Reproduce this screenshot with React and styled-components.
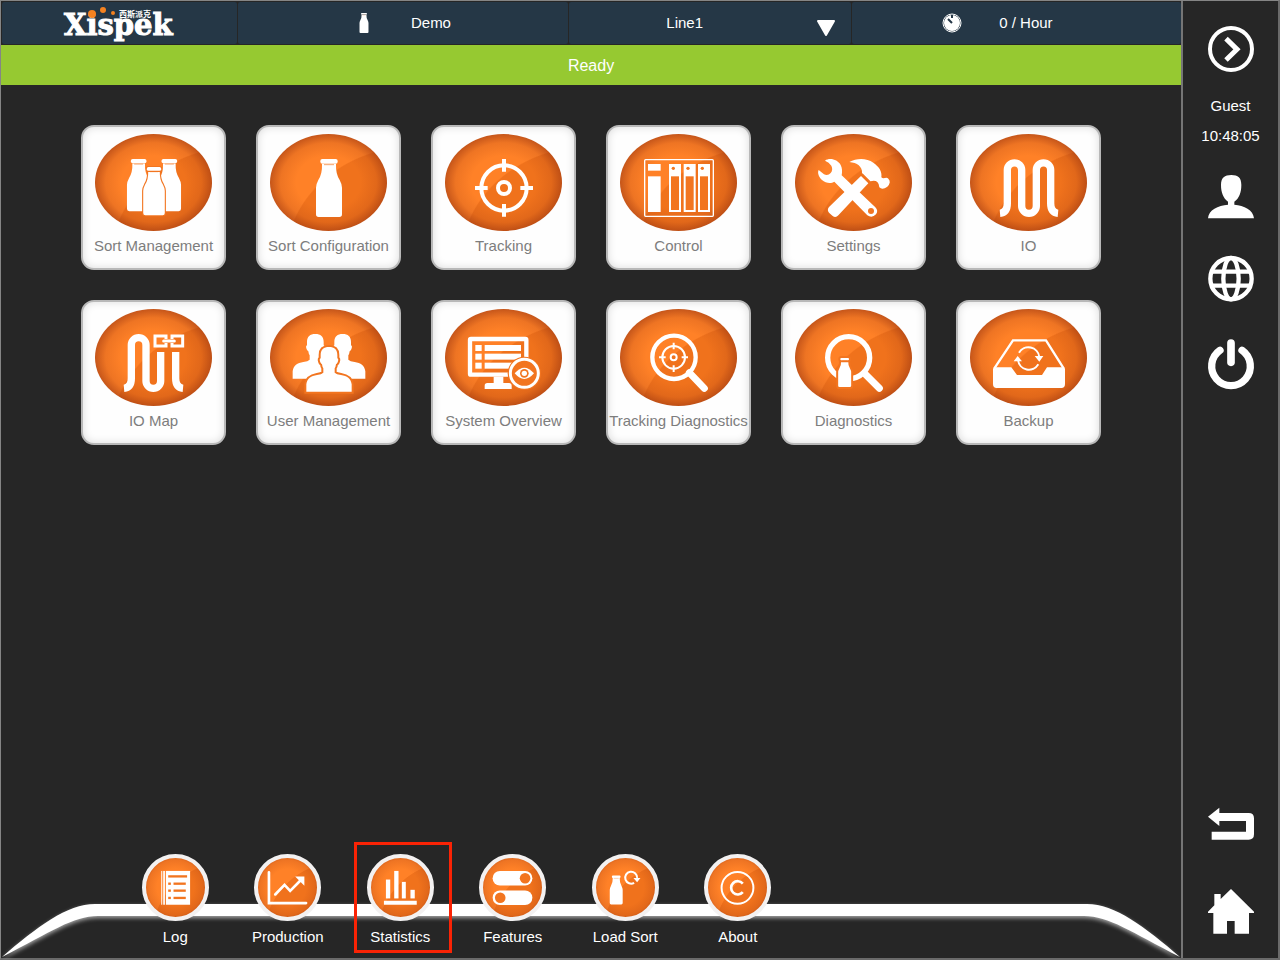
import { useState } from 'react';
import styled, { createGlobalStyle } from 'styled-components';

const ORANGE = '#f27520';

const Bottle = ({ x, y, scale = 1, outline }) => (
  <g
    transform={`translate(${x} ${y}) scale(${scale})`}
    stroke={outline ? ORANGE : 'none'}
    strokeWidth={outline ? outline * 2 : 0}
    paintOrder="stroke"
  >
    <path d="M-21 15 Q-20 45 -32 63 Q-39 76 -39 86 V166 Q-39 174 -31 174 H31 Q39 174 39 166 V86 Q39 76 32 63 Q20 45 21 15Z" />
    <rect x="-26" y="0" width="52" height="14" rx="6" />
    <path d="M-15 17 H15" stroke={ORANGE} strokeWidth="2" />
  </g>
);

const Person = ({ x, y, outline }) => (
  <path
    transform={`translate(${x} ${y})`}
    stroke={outline ? ORANGE : 'none'}
    strokeWidth="12"
    paintOrder="stroke"
    d="M-25 24 C-25 8 -16 0 0 0 C16 0 25 8 25 24 V34 Q30 36 26 46 Q24 50 21 52 Q20 60 17 64 V77 Q22 82 36 84 C54 87 66 94 68 112 V134 H-68 V112 C-66 94 -54 87 -36 84 Q-22 82 -17 77 V64 Q-20 60 -21 52 Q-24 50 -26 46 Q-30 36 -25 34Z"
  />
);

const SortManagementIcon = () => (
  <>
    <Bottle x={131} y={75} scale={0.9} />
    <Bottle x={223} y={75} scale={0.9} />
    <Bottle x={177} y={99} scale={0.83} outline={4} />
  </>
);

const SortConfigurationIcon = () => <Bottle x={177} y={75} />;

const TrackingIcon = () => (
  <g fill="none" stroke="#fff" strokeWidth="12">
    <circle cx="177" cy="162" r="68" />
    <circle cx="177" cy="162" r="18" />
    <path d="M177 75 V113 M177 210 V248 M90 162 H128 M226 162 H264" />
  </g>
);

const ControlIcon = () => (
  <>
    <rect x="74" y="77" width="206" height="170" rx="3" fill="none" stroke="#fff" strokeWidth="4" />
    <rect x="84" y="90" width="38" height="20" />
    <rect x="84" y="127" width="38" height="107" />
    {[147, 191, 234].map((x) => (
      <g key={x}>
        <rect x={x} y="90" width="36" height="144" />
        <rect x={x + 6} y="127" width="24" height="101" fill={ORANGE} />
        <circle cx={x + 13} cy="103" r="5" fill={ORANGE} />
      </g>
    ))}
  </>
);

const SettingsIcon = () => (
  <>
    <path d="M90 80 C105 70 128 77 137 93 C142 103 142 114 140 124 L241 220 Q251 230 243 241 Q231 254 217 244 L118 143 C108 150 92 148 81 138 C70 127 67 116 71 108 L87 121 Q99 126 107 117 Q115 107 109 95 Q102 84 90 80Z" />
    <circle cx="228" cy="231" r="9" fill={ORANGE} />
    <path d="M163 84 C185 72 215 72 235 86 C252 98 262 112 259 130 C266 137 274 127 280 134 Q290 144 277 158 Q262 169 253 160 Q253 150 247 144 Q240 138 226 142 L201 117 C203 98 186 86 163 84Z" />
    <path d="M198 126 L220 148 L130 244 Q122 253 113 246 L102 236 Q95 228 102 219Z" />
    <path d="M203 122 L224 144" stroke={ORANGE} strokeWidth="4" />
  </>
);

const IoIcon = () => (
  <path
    d="M90 238 Q112 236 112 208 V108 A21.5 21.5 0 0 1 155 108 V216 A22 22 0 0 0 199 216 V108 A21.5 21.5 0 0 1 242 108 V208 Q242 236 264 238"
    fill="none"
    stroke="#fff"
    strokeWidth="22"
  />
);

const IoMapIcon = () => (
  <g fill="none" stroke="#fff" strokeWidth="22">
    <path d="M87 238 Q109 236 109 208 V108 A22 22 0 0 1 153 108 V216 A22 22 0 0 0 197 216 V129" />
    <path d="M242 129 V208 Q242 236 264 238" />
    <g strokeWidth="9">
      <path d="M213 90 V81 H180 V111 H213 V102 M231 90 V81 H263 V111 H231 V102" />
      <path d="M206 96 H238" strokeLinecap="round" />
    </g>
  </g>
);

const UserManagementIcon = () => (
  <>
    <Person x={136} y={75} />
    <Person x={218} y={75} />
    <Person x={177} y={114} outline />
  </>
);

const SystemOverviewIcon = () => (
  <>
    <rect x="75" y="90" width="169" height="107" rx="3" fill="none" stroke="#fff" strokeWidth="13" />
    {[108, 134, 161].map((y) => (
      <g key={y}>
        <rect x="91" y={y} width="19" height="18" />
        <rect x="119" y={y} width="109" height="18" />
      </g>
    ))}
    <path d="M146 203 H175 V222 H192 Q200 222 200 230 V240 H119 V230 Q119 222 127 222 H146Z" />
    <circle cx="238" cy="193" r="50" fill={ORANGE} />
    <circle cx="238" cy="193" r="42" fill="none" stroke="#fff" strokeWidth="9" />
    <path d="M209 193 Q238 159 267 193 Q238 227 209 193Z" />
    <circle cx="238" cy="193" r="13" fill={ORANGE} />
    <circle cx="238" cy="193" r="8" />
  </>
);

const TrackingDiagnosticsIcon = () => (
  <g fill="none" stroke="#fff">
    <circle cx="162" cy="145" r="65" strokeWidth="13" />
    <path d="M208 191 L253 238" strokeWidth="21" strokeLinecap="round" />
    <g strokeWidth="6">
      <circle cx="161" cy="145" r="34" />
      <circle cx="161" cy="145" r="9" />
      <path d="M161 101 V121 M161 169 V189 M117 145 H137 M185 145 H204" />
    </g>
  </g>
);

const DiagnosticsIcon = () => (
  <>
    <g fill="none" stroke="#fff">
      <circle cx="161" cy="146" r="63" strokeWidth="16" />
      <path d="M208 193 L253 238" strokeWidth="21" strokeLinecap="round" />
    </g>
    <Bottle x={149} y={147} scale={0.5} outline={12} />
  </>
);

const BackupIcon = () => (
  <>
    <path d="M73 178 L129 94 H228 L281 178" fill="none" stroke="#fff" strokeWidth="7" />
    <path d="M69 180 Q69 175 75 175 H124 L141 198 H216 L231 175 H280 Q285 175 285 180 V225 Q285 237 274 237 H80 Q69 237 69 225Z" />
    <path d="M147 131 A33 33 0 0 1 208 144 M144 153 A33 33 0 0 0 205 166" fill="none" stroke="#fff" strokeWidth="6" />
    <path d="M194 141 H220 L208 158Z M131 157 H156 L143 141Z" />
  </>
);

const LogIcon = () => (
  <>
    <rect x="46" y="39" width="3" height="102" />
    <rect x="52" y="39" width="5" height="102" />
    <rect x="60" y="39" width="73" height="102" />
    <rect x="67" y="52" width="57" height="7" fill={ORANGE} />
    {[74, 95, 117].map((y) => (
      <g key={y} fill={ORANGE}>
        <rect x="67" y={y} width="8" height="7" />
        <rect x="83" y={y} width="37" height="7" />
      </g>
    ))}
  </>
);

const ProductionIcon = () => (
  <>
    <g fill="none" stroke="#fff" strokeLinecap="round">
      <path d="M33 43 V136 H145" strokeWidth="8" />
      <path d="M52 110 L80 81 L97 99 L128 68" strokeWidth="8" />
    </g>
    <path d="M112 56 H140 V84Z" />
  </>
);

const StatisticsIcon = () => (
  <>
    <rect x="45" y="65" width="13" height="57" />
    <rect x="70" y="39" width="13" height="83" />
    <rect x="93" y="72" width="12" height="50" />
    <rect x="119" y="96" width="13" height="26" />
    <rect x="39" y="129" width="99" height="12" />
  </>
);

const FeaturesIcon = () => (
  <>
    <rect x="29" y="39" width="120" height="44" rx="22" />
    <rect x="29" y="98" width="120" height="44" rx="22" />
    <circle cx="127" cy="61" r="16" fill={ORANGE} />
    <circle cx="52" cy="120" r="16" fill={ORANGE} />
  </>
);

const LoadSortIcon = () => (
  <>
    <Bottle x={61} y={53} scale={0.5} />
    <path d="M124 60 A18 18 0 1 0 115 75" fill="none" stroke="#fff" strokeWidth="6" />
    <path d="M113 60 H134 L124 73Z" />
  </>
);

const AboutIcon = () => (
  <g fill="none" stroke="#fff">
    <circle cx="89" cy="90" r="48" strokeWidth="6" />
    <path d="M105 77 A20 20 0 1 0 105 103" strokeWidth="8" />
  </g>
);

const ExpandIcon = () => (
  <g fill="none" stroke="#fff">
    <circle cx="69" cy="75" r="63" strokeWidth="12" />
    <path d="M54 44 L87 76 L54 108" strokeWidth="15" />
  </g>
);

const UserIcon = () => (
  <path d="M39 42 C39 20 50 12 70 12 C90 12 100 20 100 42 C100 64 94 82 79 92 V101 C108 104 136 116 138 142 H0 C2 116 30 104 60 101 V92 C46 82 39 64 39 42Z" />
);

const GlobeIcon = () => (
  <g fill="none" stroke="#fff" strokeWidth="13">
    <circle cx="69" cy="71" r="62" />
    <ellipse cx="69" cy="71" rx="23" ry="62" />
    <path d="M10 50 H128 M10 92 H128" />
  </g>
);

const PowerIcon = () => (
  <g fill="none" stroke="#fff" strokeLinecap="round">
    <path d="M36 34 A58 58 0 1 0 102 34" strokeWidth="22" />
    <path d="M69 12 V70" strokeWidth="23" />
  </g>
);

const BackIcon = () => (
  <path d="M0 53 L34 26 V42 H122 Q138 42 138 58 V106 Q138 122 122 122 H11 V98 H114 V66 H34 V81Z" />
);

const HomeIcon = () => (
  <path d="M69 6 L138 74 V78 H123 V140 H80 V102 H57 V140 H16 V78 H0 V74 L19 55 V21 H38 V36Z" />
);

const tiles = [
  { label: 'Sort Management', Icon: SortManagementIcon },
  { label: 'Sort Configuration', Icon: SortConfigurationIcon },
  { label: 'Tracking', Icon: TrackingIcon },
  { label: 'Control', Icon: ControlIcon },
  { label: 'Settings', Icon: SettingsIcon },
  { label: 'IO', Icon: IoIcon },
  { label: 'IO Map', Icon: IoMapIcon },
  { label: 'User Management', Icon: UserManagementIcon },
  { label: 'System Overview', Icon: SystemOverviewIcon },
  { label: 'Tracking Diagnostics', Icon: TrackingDiagnosticsIcon },
  { label: 'Diagnostics', Icon: DiagnosticsIcon },
  { label: 'Backup', Icon: BackupIcon },
];

const shortcuts = [
  { label: 'Log', Icon: LogIcon },
  { label: 'Production', Icon: ProductionIcon },
  { label: 'Statistics', Icon: StatisticsIcon },
  { label: 'Features', Icon: FeaturesIcon },
  { label: 'Load Sort', Icon: LoadSortIcon },
  { label: 'About', Icon: AboutIcon },
];

const SideAction = ({ label, children }) => (
  <SideButton type="button" aria-label={label}>
    <SideIcon viewBox="0 0 138 150">{children}</SideIcon>
  </SideButton>
);

const Logo = () => (
  <svg width="116" height="38" viewBox="0 0 116 38" role="img" aria-label="Xispek">
    <LogoText x="2" y="31">
      Xispek
    </LogoText>
    <LogoSubText x="57" y="13">
      西斯派克
    </LogoSubText>
    <g fill="#f58220">
      <circle cx="30" cy="10" r="4" />
      <circle cx="41" cy="6" r="3" />
      <circle cx="51" cy="9" r="2" />
    </g>
  </svg>
);

const App = () => {
  const [line, setLine] = useState('Line1');
  const [selected, setSelected] = useState('Statistics');

  return (
    <Page>
      <GlobalStyle />
      <Main>
        <Header>
          <HeaderCell>
            <Logo />
          </HeaderCell>
          <HeaderCell $gap={42} $left={4}>
            <svg width="10" height="20" viewBox="-42 0 84 174" fill="#fff">
              <Bottle x={0} y={0} />
            </svg>
            <span>Demo</span>
          </HeaderCell>
          <HeaderCell>
            <LineSelect
              aria-label="Line"
              value={line}
              onChange={(e) => setLine(e.target.value)}
            >
              <option>Line1</option>
            </LineSelect>
            <SelectArrow width="18" height="16" viewBox="0 0 18 16">
              <path d="M1 1 H17 L9 15Z" fill="#fff" stroke="#fff" strokeWidth="2" strokeLinejoin="round" />
            </SelectArrow>
          </HeaderCell>
          <HeaderCell $gap={37} $right={38}>
            <svg width="20" height="20" viewBox="0 0 20 20">
              <circle cx="10" cy="10" r="9" fill="#253746" stroke="#fff" />
              <circle cx="10" cy="10" r="8" fill="#fff" />
              <path d="M10 10 L6 6 M10 2 V5" stroke="#253746" strokeWidth="2" />
            </svg>
            <span>0 / Hour</span>
          </HeaderCell>
        </Header>
        <StatusBar role="status">Ready</StatusBar>
        <TileGrid>
          {tiles.map(({ label, Icon }) => (
            <Tile key={label} type="button">
              <TileBadge>
                <BadgeIcon viewBox="0 0 351 291">
                  <Icon />
                </BadgeIcon>
              </TileBadge>
              {label}
            </Tile>
          ))}
        </TileGrid>
        <Footer>
          <Swoosh>
            <SwooshEnd viewBox="0 0 100 58">
              <path d="M1 57 C36 27 66 4 94 4 H100 V16 H97 C72 16 50 32 1 57Z" />
            </SwooshEnd>
            <SwooshBar />
            <SwooshEnd viewBox="0 0 100 58">
              <path d="M99 57 C64 27 34 4 6 4 H0 V16 H3 C28 16 50 32 99 57Z" />
            </SwooshEnd>
          </Swoosh>
          <ShortcutNav>
            {shortcuts.map(({ label, Icon }) => (
              <Shortcut
                key={label}
                type="button"
                $selected={selected === label}
                onClick={() => setSelected(label)}
              >
                <ShortcutBadge>
                  <BadgeIcon viewBox="0 0 178 178">
                    <Icon />
                  </BadgeIcon>
                </ShortcutBadge>
                {label}
              </Shortcut>
            ))}
          </ShortcutNav>
        </Footer>
      </Main>
      <Sidebar>
        <SideAction label="Expand">
          <ExpandIcon />
        </SideAction>
        <Session>
          <span>Guest</span>
          <time>10:48:05</time>
        </Session>
        <SideGroup $gap={34}>
          <SideAction label="User">
            <UserIcon />
          </SideAction>
          <SideAction label="Language">
            <GlobeIcon />
          </SideAction>
          <SideAction label="Power">
            <PowerIcon />
          </SideAction>
        </SideGroup>
        <SideGroup $gap={38} $bottom>
          <SideAction label="Back">
            <BackIcon />
          </SideAction>
          <SideAction label="Home">
            <HomeIcon />
          </SideAction>
        </SideGroup>
      </Sidebar>
    </Page>
  );
};

export default App;

const GlobalStyle = createGlobalStyle`
  * {
    box-sizing: border-box;
  }

  body {
    margin: 0;
    background: #262626;
    font-family: 'Liberation Sans', Arial, sans-serif;
    font-size: 15px;
    line-height: 18px;
    color: #fff;
  }

  button, select {
    margin: 0;
    padding: 0;
    border: none;
    background: none;
    font: inherit;
    color: inherit;
    cursor: pointer;
  }
`;

const Page = styled.div`
  display: flex;
  min-height: 100vh;
  border: 1px solid #858585;
  border-right: 2px solid #6a6a6a;
  border-bottom: 2px solid #6a6a6a;
  background: #262626;
`;

const Main = styled.main`
  flex: 1;
  min-width: 0;
  display: flex;
  flex-direction: column;
`;

const Header = styled.header`
  display: grid;
  grid-template-columns: 236fr 330fr 283fr 330fr;
  gap: 1px;
  padding: 1px 0 1px 1px;
`;

const HeaderCell = styled.div`
  position: relative;
  display: flex;
  align-items: center;
  justify-content: center;
  gap: ${({ $gap = 0 }) => $gap}px;
  height: 42px;
  padding-left: ${({ $left = 0 }) => $left}px;
  padding-right: ${({ $right = 0 }) => $right}px;
  border-radius: 2px;
  background: #253746;
`;

const LogoText = styled.text`
  font-family: 'DejaVu Serif', serif;
  font-size: 29px;
  font-weight: bold;
  fill: #fff;
  stroke: #fff;
  stroke-width: 1px;
`;

const LogoSubText = styled.text`
  font-family: 'Noto Sans CJK SC', sans-serif;
  font-size: 8px;
  font-weight: bold;
  fill: #fff;
`;

const LineSelect = styled.select`
  width: 100%;
  height: 100%;
  && {
    padding-right: 50px;
  }
  appearance: none;
  text-align: center;
`;

const SelectArrow = styled.svg`
  position: absolute;
  right: 16px;
  bottom: 8px;
  pointer-events: none;
`;

const StatusBar = styled.div`
  padding: 12px 0 10px;
  background: #96c931;
  font-size: 16px;
  text-align: center;
`;

const TileGrid = styled.nav`
  display: grid;
  grid-template-columns: repeat(auto-fill, 145px);
  justify-content: center;
  gap: 30px;
  padding: 40px 70px;
`;

const Tile = styled.button`
  display: flex;
  flex-direction: column;
  align-items: center;
  gap: 6px;
  height: 145px;
  && {
    padding-top: 7px;
    border: 2px solid #b8b8b8;
    background: #fefefe;
    color: #7d7d7d;
  }
  border-radius: 13px;
  box-shadow: inset 0 0 8px rgba(0, 0, 0, 0.14);
  white-space: nowrap;
`;

const Badge = styled.span`
  display: block;
  border-radius: 50%;
  background:
    radial-gradient(closest-side, transparent 55%, rgba(150, 50, 15, 0.16) 82%, rgba(150, 50, 15, 0.55) 100%),
    radial-gradient(112% 118% at 125% 130%, #f0721c 99%, transparent 100%),
    #ff8127;
`;

const TileBadge = styled(Badge)`
  width: 117px;
  height: 97px;
`;

const BadgeIcon = styled.svg`
  display: block;
  width: 100%;
  height: 100%;
  fill: #fff;
`;

const Footer = styled.footer`
  position: relative;
  margin-top: auto;
`;

const Swoosh = styled.div`
  position: absolute;
  right: 0;
  bottom: 0;
  left: 0;
  display: flex;
  height: 58px;
  overflow: hidden;
  filter: drop-shadow(0 2px 2px rgba(255, 255, 255, 0.6));
`;

const SwooshEnd = styled.svg`
  flex: none;
  width: 100px;
  height: 58px;
  fill: #fff;
`;

const SwooshBar = styled.div`
  flex: 1;
  height: 12px;
  margin-top: 4px;
  background: #fff;
`;

const ShortcutNav = styled.nav`
  position: relative;
  display: grid;
  grid-template-columns: repeat(6, 1fr);
  width: 675px;
  max-width: 100%;
  margin-left: 118px;
`;

const Shortcut = styled.button`
  position: relative;
  display: flex;
  flex-direction: column;
  align-items: center;
  gap: 7px;
  && {
    padding-bottom: 12px;
  }

  &::after {
    content: '';
    display: ${({ $selected }) => ($selected ? 'block' : 'none')};
    position: absolute;
    top: -12px;
    right: 5px;
    bottom: 5px;
    left: 10px;
    border: 3px solid #fa2305;
  }
`;

const ShortcutBadge = styled(Badge)`
  width: 67px;
  height: 67px;
  border: 4px solid #f3f1f1;
  background-origin: border-box;
`;

const Sidebar = styled.aside`
  flex: none;
  display: flex;
  flex-direction: column;
  align-items: center;
  width: 97px;
  padding: 23px 0 21px;
  border-left: 2px solid #757575;
`;

const Session = styled.div`
  display: flex;
  flex-direction: column;
  align-items: center;
  gap: 12px;
  padding: 23px 0 26px;
`;

const SideGroup = styled.div`
  display: flex;
  flex-direction: column;
  gap: ${({ $gap }) => $gap}px;
  margin-top: ${({ $bottom }) => ($bottom ? 'auto' : '0')};
`;

const SideButton = styled.button`
  display: block;
  width: 46px;
  height: 50px;
`;

const SideIcon = styled.svg`
  display: block;
  width: 46px;
  height: 50px;
  fill: #fff;
  overflow: visible;
`;
